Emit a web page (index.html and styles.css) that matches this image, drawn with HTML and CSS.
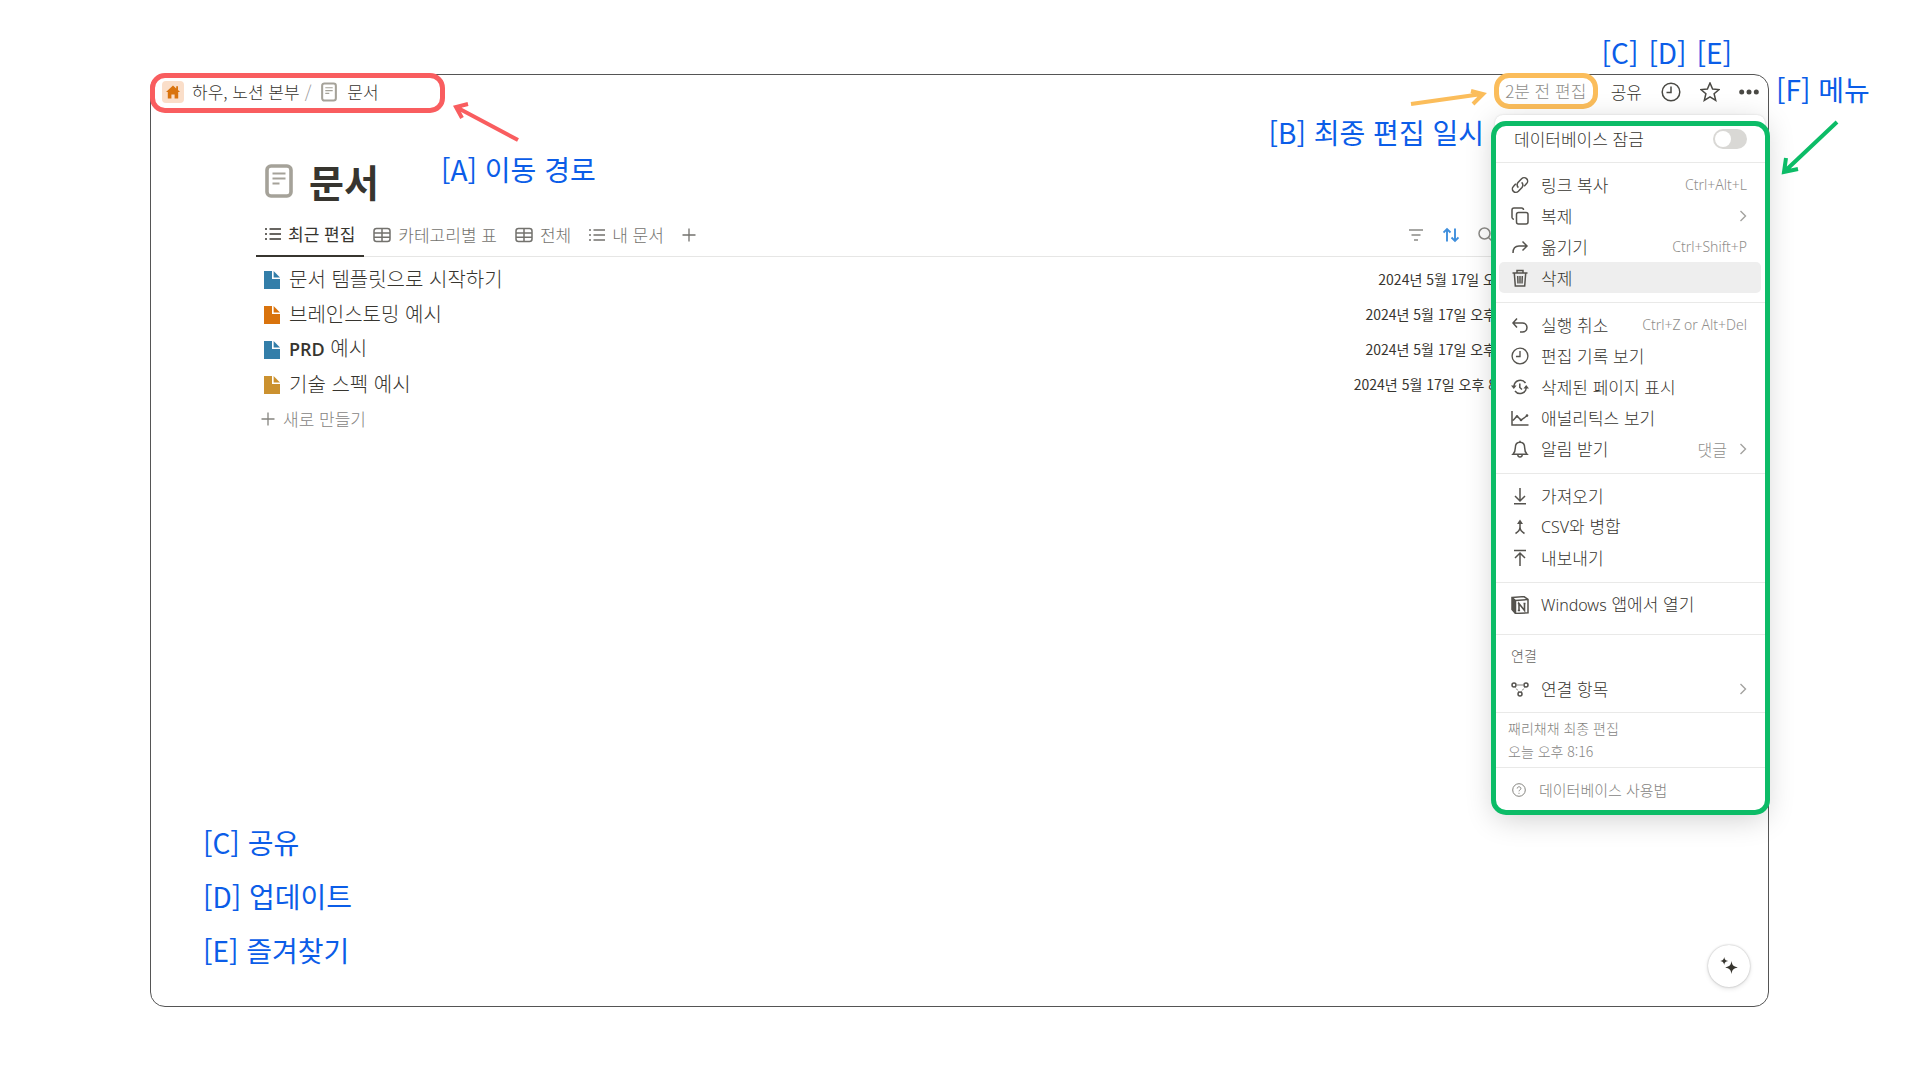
FILE: index.html
```html
<!DOCTYPE html>
<html lang="ko">
<head>
  <meta charset="UTF-8" />
  <meta name="viewport" content="width=device-width, initial-scale=1" />
  <title>문서</title>
  <link rel="stylesheet" href="styles.css">
</head>
<body>

  <!-- shared icons -->
  <svg class="sprite" aria-hidden="true">
    <symbol id="i-page" viewBox="0 0 28 34"><rect x="2" y="2" width="24" height="30" rx="4" stroke-width="3.6"/><path d="M7.5 9.5h13M7.5 14.5h13M7.5 19.5h7" stroke-width="2"/></symbol>
    <symbol id="i-list" viewBox="0 0 16 16"><path d="M4.5 3H16M4.5 8H16M4.5 13H16M0 3h2M0 8h2M0 13h2" stroke-width="1.7"/></symbol>
    <symbol id="i-table" viewBox="0 0 18 16"><rect x="1" y="1.5" width="16" height="13" rx="2.5"/><path d="M1 6h16M1 10.3h16M9 1.5v13"/></symbol>
    <symbol id="i-plus" viewBox="0 0 14 14"><path d="M7 .5v13M.5 7h13" stroke-width="1.3"/></symbol>
    <symbol id="i-file" viewBox="0 0 16 18"><path d="M0 0h8v8h8v10H0z"/><path d="M9.6 0L16 6.5H9.6z"/></symbol>
    <symbol id="i-clock" viewBox="0 0 20 20"><circle cx="10" cy="10" r="8.8"/><path d="M10 4.5V10.5H5.5"/></symbol>
    <symbol id="i-chevron" viewBox="0 0 8 12"><path d="M1.5 1l5 5-5 5" stroke-width="1.4"/></symbol>
  </svg>

  <main class="window">
    <header class="topbar">
      <nav class="crumbs" aria-label="이동 경로">
        <span class="home">
          <svg viewBox="0 0 14 14"><path d="M7 .5L0 7h1.8v6.5h3.6V9.4h3.2v4.1h3.6V7H14l-2-1.9V1.3h-1.8v2.1z"/></svg>
        </span>
        <a href="#">하우, 노션 본부</a>
        <span class="slash">/</span>
        <svg class="crumb-page"><use href="#i-page"/></svg>
        <a href="#">문서</a>
      </nav>
      <div class="actions">
        <span class="edited">2분 전 편집</span>
        <button class="share">공유</button>
        <button aria-label="업데이트"><svg class="icon20"><use href="#i-clock"/></svg></button>
        <button aria-label="즐겨찾기"><svg class="icon20" viewBox="0 0 20 20"><path d="M10 1l2.6 6.1 6.5.5-5 4.2 1.6 6.6L10 14.9l-5.7 3.5 1.6-6.6-5-4.2 6.5-.5z"/></svg></button>
        <button aria-label="메뉴"><svg class="icon20 dots" viewBox="0 0 20 20"><circle cx="2.7" cy="10" r="2.5"/><circle cx="10" cy="10" r="2.5"/><circle cx="17.3" cy="10" r="2.5"/></svg></button>
      </div>
    </header>

    <section class="content">
      <h1><svg class="title-icon"><use href="#i-page"/></svg>문서</h1>

      <div class="views">
        <button class="tab active"><svg class="icon16"><use href="#i-list"/></svg>최근 편집</button>
        <button class="tab"><svg class="icon18"><use href="#i-table"/></svg>카테고리별 표</button>
        <button class="tab"><svg class="icon18"><use href="#i-table"/></svg>전체</button>
        <button class="tab"><svg class="icon16"><use href="#i-list"/></svg>내 문서</button>
        <button class="tab" aria-label="보기 추가"><svg class="icon14"><use href="#i-plus"/></svg></button>
        <div class="tools">
          <button aria-label="필터"><svg class="icon16" viewBox="0 0 16 16"><path d="M1 3h14M3.5 8h9M6 13h4" stroke-width="1.7"/></svg></button>
          <button class="sort" aria-label="정렬"><svg class="icon16" viewBox="0 0 16 16"><path d="M4 14.5V2M.5 5.500L4 2l3.500 3.500M12 1.500V14M8.500 10.500L12 14l3.500-3.500" stroke-width="1.9"/></svg></button>
          <button aria-label="검색"><svg class="icon16" viewBox="0 0 16 16"><circle cx="6.5" cy="6.5" r="5.5"/><path d="M10.5 10.5l5 5"/></svg></button>
        </div>
      </div>

      <ul class="docs">
        <li><svg class="file blue"><use href="#i-file"/></svg><a href="#">문서 템플릿으로 시작하기</a><time>2024년 5월 17일 오</time></li>
        <li><svg class="file orange"><use href="#i-file"/></svg><a href="#">브레인스토밍 예시</a><time>2024년 5월 17일 오후</time></li>
        <li><svg class="file blue"><use href="#i-file"/></svg><a href="#"><b>PRD</b> 예시</a><time>2024년 5월 17일 오후</time></li>
        <li><svg class="file yellow"><use href="#i-file"/></svg><a href="#">기술 스펙 예시</a><time>2024년 5월 17일 오후 8</time></li>
      </ul>
      <button class="new"><svg class="icon14"><use href="#i-plus"/></svg>새로 만들기</button>
    </section>

    <aside class="menu">
      <div class="group lock">
        <label for="lock">데이터베이스 잠금</label>
        <input type="checkbox" id="lock" class="toggle" />
      </div>
      <div class="group">
        <button class="item"><svg class="icon18" viewBox="0 0 18 18"><path d="M7.4 11.6a3.5 3.5 0 0 1-.4-5l3.6-3.9a3.5 3.5 0 0 1 5 4.9l-2.4 2.6M10.6 6.4a3.5 3.5 0 0 1 .4 5l-3.6 3.9a3.5 3.5 0 0 1-5-4.9l2.4-2.6"/></svg>링크 복사<kbd>Ctrl+Alt+L</kbd></button>
        <button class="item"><svg class="icon18" viewBox="0 0 18 18"><rect x="5.5" y="5.5" width="11.5" height="11.5" rx="2"/><path d="M3 12.3A2 2 0 0 1 1 10.500V3a2 2 0 0 1 2-2h7.500a2 2 0 0 1 2 2"/></svg>복제<svg class="chevron"><use href="#i-chevron"/></svg></button>
        <button class="item"><svg class="icon18" viewBox="0 0 18 18"><path d="M2 15c0-5 2-7 6-7h8M11.500 3.500L16 8l-4.500 4.500"/></svg>옮기기<kbd>Ctrl+Shift+P</kbd></button>
        <button class="item hover"><svg class="icon18" viewBox="0 0 18 18"><path d="M1.500 4h15M6 4V1.500h6V4M3.300 4l1 13h9.400l1-13M6.700 7l.3 7.500M9 7v7.500M11.300 7l-.3 7.500"/></svg>삭제</button>
      </div>
      <div class="group">
        <button class="item"><svg class="icon18" viewBox="0 0 18 18"><path d="M6 2.500L2 7l4 4.500M2 7h9.500a4.500 4.500 0 0 1 0 9H9"/></svg>실행 취소<kbd>Ctrl+Z or Alt+Del</kbd></button>
        <button class="item"><svg class="icon18"><use href="#i-clock"/></svg>편집 기록 보기</button>
        <button class="item"><svg class="icon18" viewBox="0 0 18 18"><path d="M3 8a6.300 6.300 0 0 1 11.500-3M15.300 9.500A6.300 6.300 0 0 1 4 13M8.800 5.500v4l2.200 2"/><path class="solid" d="M0 7.500h5.600L2.800 11zM12.400 10.500H18L15.200 7z"/></svg>삭제된 페이지 표시</button>
        <button class="item"><svg class="icon18" viewBox="0 0 18 18"><path d="M1 2v14h16.500M2 11.500L6 7l4 4 6.500-4.500"/><circle class="solid" cx="6" cy="7.500" r="1.300"/><circle class="solid" cx="10" cy="11" r="1.300"/><circle class="solid" cx="16" cy="6.500" r="1.300"/></svg>애널리틱스 보기</button>
        <button class="item"><svg class="icon18" viewBox="0 0 18 18"><path d="M2 14.300c2-2 2.300-3 2.300-6.300 0-3.500 1.700-5.700 4.700-5.700s4.700 2.200 4.700 5.700c0 3.300.3 4.300 2.300 6.300zM9 .8v1.500M6.800 15c.3 2.700 4.100 2.700 4.400 0"/></svg>알림 받기<span class="value">댓글</span><svg class="chevron"><use href="#i-chevron"/></svg></button>
      </div>
      <div class="group">
        <button class="item"><svg class="icon18" viewBox="0 0 18 18"><path d="M9 1v13M4 9l5 5 5-5M3 16.800h12"/></svg>가져오기</button>
        <button class="item"><svg class="icon18" viewBox="0 0 18 18"><path d="M9 3.500V9c0 3-2 5-4.500 6.500M9 9c0 3 2 5 4.500 6.500"/><path class="solid" d="M9 1.500L12 6H6z"/></svg><span><small>CSV</small>와 병합</span></button>
        <button class="item"><svg class="icon18" viewBox="0 0 18 18"><path d="M9 17V4M4 9l5-5 5 5M3 1.500h12"/></svg>내보내기</button>
      </div>
      <div class="group app">
        <button class="item"><svg class="icon18" viewBox="0 0 18 18"><path d="M1 1.500l12-.9 4 2.900v13.300L4.500 17.500 1 13.500z"/><path d="M1 1.500l3.500 3 12.500-1M4.500 4.500v13" /><path class="solid" d="M1 1.500l3.500 3v13L1 13.500z"/><path d="M8 14.500v-7l5.500 7v-7M6.800 7.500h1.700M12.500 7.500h2M6.800 14.500h2.300" stroke-width="1.600"/></svg><span><small>Windows</small> 앱에서 열기</span></button>
      </div>
      <div class="group connections">
        <h2>연결</h2>
        <button class="item"><svg class="icon18" viewBox="0 0 18 18"><circle cx="3" cy="5" r="2"/><circle cx="15" cy="5" r="2"/><circle cx="9" cy="14" r="2"/><path d="M6.500 5h5" stroke-dasharray="1 1"/><path d="M4.500 7.500l3 4M13.500 7.500l-3 4" stroke-width="1" stroke-dasharray="1 1"/></svg>연결 항목<svg class="chevron"><use href="#i-chevron"/></svg></button>
      </div>
      <p class="group info">째리채채 최종 편집<br>오늘 오후 8:16</p>
      <a class="group help" href="#"><svg class="icon14" viewBox="0 0 14 14"><circle cx="7" cy="7" r="6.300"/><path d="M5.200 5.500c0-2.300 3.700-2.200 3.700 0C8.900 7 7 6.800 7 8.300M7 9.800v1"/></svg>데이터베이스 사용법</a>
    </aside>

    <button class="ai" aria-label="AI"><svg viewBox="0 0 18 18"><path d="M11.500 4c.8 4.300 1.700 5.400 6.300 6.500-4.600 1.100-5.500 2.200-6.300 6.500-.8-4.300-1.700-5.400-6.300-6.500 4.600-1.100 5.500-2.200 6.300-6.500z"/><path d="M4.200 0c.6 2.700 1.200 3.400 4 4-2.800.6-3.400 1.300-4 4C3.600 5.300 3 4.600.2 4c2.800-.6 3.400-1.300 4-4z"/></svg></button>

    <!-- notes written over the window -->
    <svg class="arrow arrow-a" viewBox="0 0 70 44"><path d="M66 38L4 5M16 2L4 5l6 11"/></svg>
    <svg class="arrow arrow-b" viewBox="0 0 78 22"><path d="M2 15L73 5M62 2l12 3-10 10"/></svg>
    <svg class="arrow arrow-f" viewBox="0 0 60 58"><path d="M57 3L4 53M6 39L4 53l14-3"/></svg>
    <span class="note note-a">[A] 이동 경로</span>
    <span class="note note-b">[B] 최종 편집 일시</span>
    <div class="note note-top"><span>[C]</span><span>[D]</span><span>[E]</span></div>
    <span class="note note-f">[F] 메뉴</span>
    <ul class="note legend">
      <li>[C] 공유</li>
      <li>[D] 업데이트</li>
      <li>[E] 즐겨찾기</li>
    </ul>
  </main>

</body>
</html>
```
FILE: styles.css
```css
* {
  margin: 0; padding: 0; box-sizing: border-box;
}
body {
  min-height: 100vh;
  padding: 74px 151px 74px 150px;
  font-family: "Noto Sans CJK KR", "Noto Sans", sans-serif;
  font-size: 17px;
  font-weight: 300;
  line-height: 24px;
  color: #37352f;
  background: #fff;
}
button {
  display: flex;
  align-items: center;
  border: none;
  background: none;
  font: inherit;
  color: inherit;
  cursor: pointer;
}
a {
  color: inherit;
  text-decoration: none;
}
ul {
  list-style: none;
}
svg {
  flex: none;
  fill: none;
  stroke: currentColor;
  stroke-width: 1.5;
}
.sprite { position: absolute; width: 0; height: 0; }
.icon14 { width: 14px; height: 14px; }
.icon16 { width: 16px; height: 16px; }
.icon18 { width: 18px; height: 18px; }
.icon20 { width: 20px; height: 20px; }
.solid {
  fill: currentColor;
  stroke: none;
}

.window {
  position: relative;
  min-height: calc(100vh - 147px);
  border: 1px solid #555;
  border-radius: 15px;
}

/* top bar */
.topbar {
  display: flex;
  justify-content: space-between;
  margin: -2px -1px;
}
.crumbs {
  display: flex;
  align-items: center;
  width: 295px;
  height: 40px;
  padding: 0 0 2px 7px;
  border: 5px solid #f95d5f;
  border-radius: 15px;
}
.home {
  display: grid;
  place-items: center;
  width: 22px;
  height: 22px;
  margin-right: 8px;
  border-radius: 4px;
  background: #fadec9;
}
.home svg {
  width: 14px;
  height: 14px;
  fill: #d9730d;
  stroke: none;
}
.slash {
  margin: 0 10px 0 5px;
  color: #999;
}
.crumb-page {
  width: 16px;
  height: 20px;
  margin-right: 10px;
  color: #a5a299;
}
.actions {
  display: flex;
  align-items: center;
  gap: 19px;
  padding: 0 10px 2px 0;
}
.edited {
  align-self: flex-start;
  width: 104px;
  height: 36px;
  margin-right: -6px;
  border: 5px solid #fbbd5b;
  border-radius: 15px;
  line-height: 26px;
  text-align: center;
  color: #8f8e8b;
}
.actions svg {
  color: #4a4944;
}
.dots {
  fill: currentColor;
  stroke: none;
}

/* database */
.content {
  padding: 42px 105px 0;
}
h1 {
  display: flex;
  align-items: center;
  height: 56px;
  padding-left: 9px;
  gap: 16px;
  font-size: 38px;
  font-weight: 700;
  line-height: 52px;
}
.title-icon {
  width: 28px;
  height: 34px;
  color: #a5a299;
}
.views {
  display: flex;
  height: 48px;
  border-bottom: 1px solid #e6e6e5;
  color: #73726e;
}
.tab {
  gap: 7px;
  height: 48px;
  padding: 4px 9px 0;
}
.tab.active {
  border-bottom: 2px solid #37352f;
  font-weight: 400;
  color: #37352f;
}
.tools {
  display: flex;
  gap: 19px;
  margin-left: auto;
  padding: 4px 169px 0 0;
  color: #8b8a86;
}
.tools .sort {
  color: #3f8fdd;
}
.docs {
  padding-top: 4px;
}
.docs li {
  display: flex;
  align-items: center;
  height: 35px;
  padding: 0 167px 0 8px;
  font-size: 20px;
}
.docs b {
  font-family: "Open Sans", sans-serif;
  font-size: 18px;
  font-weight: 600;
}
.file {
  width: 16px;
  height: 18px;
  margin: 2px 9px 0 0;
  stroke: none;
}
.blue { fill: #337ea9; }
.orange { fill: #d9730d; }
.yellow { fill: #cb912f; }
.docs time {
  margin-left: auto;
  font-size: 14px;
  font-weight: 400;
}
.new {
  height: 35px;
  gap: 8px;
  padding-left: 5px;
  color: #85847f;
}

/* page menu */
.menu {
  position: absolute;
  top: 40px;
  right: 3px;
  width: 270px;
  border-radius: 8px;
  background: #fff;
  box-shadow: 0 0 2px rgba(0,0,0,0.15), 0 8px 30px rgba(0,0,0,0.2);
}
.menu::after {
  content: "";
  position: absolute;
  inset: 6px -5px -5px -4px;
  border: 5px solid #0cbc67;
  border-radius: 15px;
  pointer-events: none;
}
.group {
  padding: 6px 4px 9px;
  border-bottom: 1px solid #e9e9e8;
}
.item {
  width: 100%;
  height: 31px;
  gap: 12px;
  padding: 0 14px 0 12px;
  border-radius: 5px;
}
.item.hover {
  background: #eee;
}
.item svg {
  color: #55534e;
}
.item small {
  font-family: "Noto Sans", sans-serif;
  font-size: 16px;
}
kbd, .value {
  margin-left: auto;
  color: #8f8e8b;
}
kbd {
  font-family: "Noto Sans", sans-serif;
  font-size: 14px;
}
.value {
  font-size: 16px;
}
.item .chevron {
  width: 8px;
  height: 12px;
  margin-left: auto;
  color: #a3a29f;
}
.item .value + .chevron {
  margin-left: 0;
}
.lock {
  display: flex;
  align-items: center;
  justify-content: space-between;
  height: 48px;
  padding: 0 18px 0 19px;
}
.toggle {
  display: flex;
  align-items: center;
  width: 34px;
  height: 20px;
  padding: 2px;
  border-radius: 10px;
  background: #d9d8d5;
  appearance: none;
}
.toggle::before {
  content: "";
  width: 16px;
  height: 16px;
  border-radius: 50%;
  background: #fff;
}
.toggle:checked {
  justify-content: flex-end;
  background: #337ea9;
}
.app {
  padding-bottom: 14px;
}
.connections {
  padding: 8px 4px 8px;
}
.connections h2 {
  margin-bottom: 6px;
  padding-left: 12px;
  font-size: 14px;
  font-weight: inherit;
  color: #65645f;
}
.info {
  padding: 4px 13px;
  font-size: 14px;
  line-height: 23px;
  color: #85847f;
}
.help {
  display: flex;
  align-items: center;
  gap: 13px;
  height: 42px;
  padding: 2px 17px 0;
  border: none;
  font-size: 15px;
  color: #85847f;
}
.help svg {
  stroke-width: 1;
}

.ai {
  position: absolute;
  right: 18px;
  bottom: 19px;
  justify-content: center;
  width: 42px;
  height: 42px;
  border-radius: 50%;
  background: #fff;
  box-shadow: 0 0 2px rgba(0,0,0,0.3), 0 2px 5px rgba(0,0,0,0.1);
}
.ai svg {
  width: 18px;
  height: 18px;
  fill: #37352f;
  stroke: none;
}

/* notes */
.note {
  position: absolute;
  font-size: 28px;
  font-weight: 400;
  line-height: 32px;
  white-space: nowrap;
  color: #0b5de8;
}
.note-a { top: 78px; left: 290px; }
.note-b { top: 41px; right: 284px; }
.note-f { top: -2px; left: calc(100% + 8px); }
.note-top {
  display: flex;
  gap: 10px;
  top: -39px;
  right: 36px;
}
.legend {
  left: 52px;
  bottom: 29px;
  line-height: 54px;
}
.arrow {
  position: absolute;
  stroke-width: 4;
}
.arrow-a {
  top: 27px;
  left: 301px;
  width: 70px;
  height: 44px;
  color: #f95d5f;
}
.arrow-b {
  top: 14px;
  right: 281px;
  width: 78px;
  height: 22px;
  color: #fbbd5b;
}
.arrow-f {
  top: 44px;
  left: calc(100% + 12px);
  width: 60px;
  height: 58px;
  color: #0cbc67;
}
```
